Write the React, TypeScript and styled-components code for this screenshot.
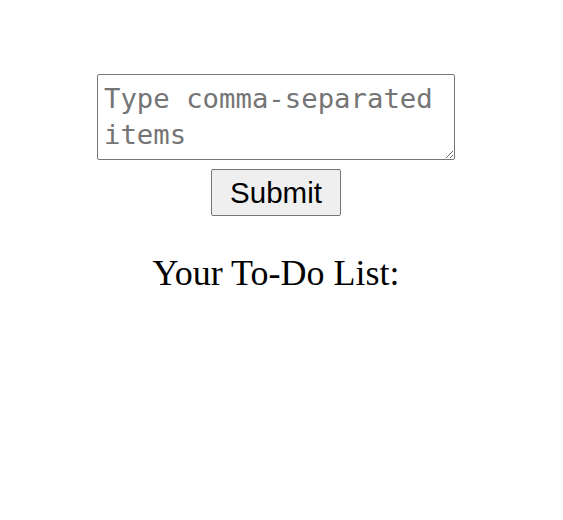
import React from "react";
import styled, { createGlobalStyle } from "styled-components";

const Global = createGlobalStyle`
  html, body { margin: 0; padding: 0; background: #ffffff; }
  body { font-family: "Liberation Serif", "Times New Roman", serif; }
`;

const Page = styled.main`
  width: 552px;
  padding-top: 74px;
  display: flex;
  flex-direction: column;
  align-items: center;
`;

const Form = styled.form`
  display: flex;
  flex-direction: column;
  align-items: center;
  gap: 9px;
`;

const Items = styled.textarea`
  box-sizing: border-box;
  width: 358px;
  height: 86px;
  margin: 0;
  padding: 6px 6px 2px;
  border: 1px solid #767676;
  border-radius: 2px;
  font-family: "DejaVu Sans Mono", monospace;
  font-size: 27.3px;
  line-height: 36px;
  color: #000;
  resize: both;
  &::placeholder { color: #757575; }
`;

const SubmitButton = styled.button`
  box-sizing: border-box;
  width: 130px;
  height: 47px;
  margin: 0;
  padding: 0;
  border: 1px solid #767676;
  border-radius: 2px;
  background: #efefef;
  color: #000;
  font-family: "Liberation Sans", Arial, sans-serif;
  font-size: 29.5px;
`;

const Heading = styled.h2`
  margin: 37px 0 0;
  font-family: "Liberation Serif", "Times New Roman", serif;
  font-weight: normal;
  font-size: 36px;
  line-height: 40px;
  color: #000;
`;

export default function App() {
  return (
    <>
      <Global />
      <Page>
        <Form onSubmit={(e) => e.preventDefault()}>
          <Items placeholder="Type comma-separated items" />
          <SubmitButton type="submit">Submit</SubmitButton>
        </Form>
        <Heading>Your To-Do List:</Heading>
      </Page>
    </>
  );
}
